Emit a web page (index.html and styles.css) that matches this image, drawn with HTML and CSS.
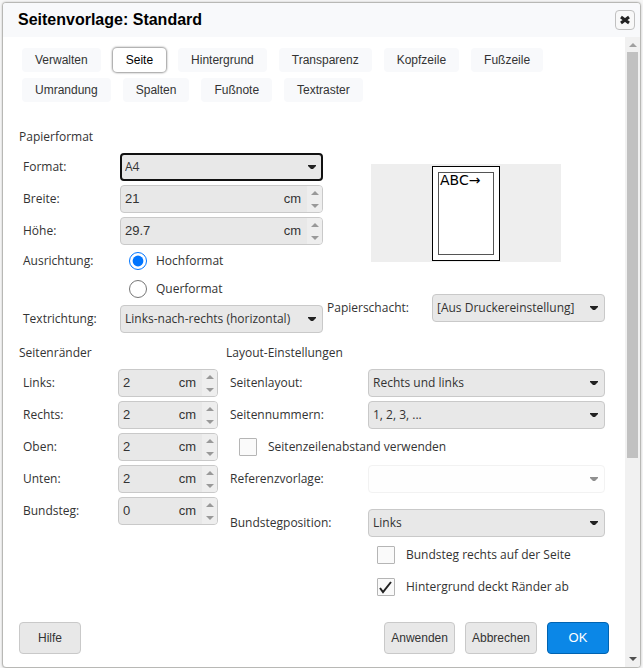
FILE: index.html
```html
<!DOCTYPE html>
<html lang="de">
<head>
<meta charset="utf-8">
<title>Seitenvorlage: Standard</title>
<meta name="viewport" content="width=device-width, initial-scale=1">
<link rel="stylesheet" href="styles.css">
</head>
<body>
<svg class="defs" aria-hidden="true">
  <symbol id="caret" viewBox="0 0 8 4"><path d="M0 0h8v1L5 4H3L0 1z"/></symbol>
  <symbol id="up" viewBox="0 0 8 4"><path d="M4 0l4 4H0z"/></symbol>
  <symbol id="down" viewBox="0 0 8 4"><path d="M0 0h8L4 4z"/></symbol>
</svg>
<div class="dialog" role="dialog" aria-labelledby="title">
  <header class="titlebar">
    <h1 id="title">Seitenvorlage: Standard</h1>
    <button class="close" type="button" aria-label="Schließen"><svg viewBox="0 0 10 10"><path d="M1 2l8 6M9 2L1 8"/></svg></button>
  </header>
  <div class="body">
    <form class="content">
      <nav class="tabs" role="tablist">
        <button type="button" role="tab" class="tab">Verwalten</button>
        <button type="button" role="tab" class="tab active" aria-selected="true">Seite</button>
        <button type="button" role="tab" class="tab">Hintergrund</button>
        <button type="button" role="tab" class="tab">Transparenz</button>
        <button type="button" role="tab" class="tab">Kopfzeile</button>
        <button type="button" role="tab" class="tab">Fußzeile</button>
        <button type="button" role="tab" class="tab">Umrandung</button>
        <button type="button" role="tab" class="tab">Spalten</button>
        <button type="button" role="tab" class="tab">Fußnote</button>
        <button type="button" role="tab" class="tab">Textraster</button>
      </nav>

      <h2 class="paper-title">Papierformat</h2>
      <div class="paper">
        <div class="rows paper-rows">
          <label for="format">Format:</label>
          <div class="select focused"><select id="format"><option>A4</option></select><svg class="caret"><use href="#caret"/></svg></div>
          <label for="width">Breite:</label>
          <div class="spin"><input id="width" type="number" step="any" value="21"><span>cm</span><div class="steps"><button type="button" aria-label="Mehr"><svg><use href="#up"/></svg></button><button type="button" aria-label="Weniger"><svg><use href="#down"/></svg></button></div></div>
          <label for="height">Höhe:</label>
          <div class="spin"><input id="height" type="number" step="any" value="29.7"><span>cm</span><div class="steps"><button type="button" aria-label="Mehr"><svg><use href="#up"/></svg></button><button type="button" aria-label="Weniger"><svg><use href="#down"/></svg></button></div></div>
          <span class="orientation">Ausrichtung:</span>
          <div class="radios">
            <label><input type="radio" name="orientation" checked>Hochformat</label>
            <label><input type="radio" name="orientation">Querformat</label>
          </div>
          <label for="direction">Textrichtung:</label>
          <div class="select"><select id="direction"><option>Links-nach-rechts (horizontal)</option></select><svg class="caret"><use href="#caret"/></svg></div>
        </div>
        <div class="paper-side">
          <div class="preview"><div class="sheet"><div class="sheet-text">ABC→</div></div></div>
          <div class="tray">
            <label for="tray">Papierschacht:</label>
            <div class="select"><select id="tray"><option>[Aus Druckereinstellung]</option></select><svg class="caret"><use href="#caret"/></svg></div>
          </div>
        </div>
      </div>

      <div class="lower">
        <section>
          <h2>Seitenränder</h2>
          <div class="rows margin-rows">
            <label for="left">Links:</label>
            <div class="spin"><input id="left" type="number" step="any" value="2"><span>cm</span><div class="steps"><button type="button" aria-label="Mehr"><svg><use href="#up"/></svg></button><button type="button" aria-label="Weniger"><svg><use href="#down"/></svg></button></div></div>
            <label for="right">Rechts:</label>
            <div class="spin"><input id="right" type="number" step="any" value="2"><span>cm</span><div class="steps"><button type="button" aria-label="Mehr"><svg><use href="#up"/></svg></button><button type="button" aria-label="Weniger"><svg><use href="#down"/></svg></button></div></div>
            <label for="top">Oben:</label>
            <div class="spin"><input id="top" type="number" step="any" value="2"><span>cm</span><div class="steps"><button type="button" aria-label="Mehr"><svg><use href="#up"/></svg></button><button type="button" aria-label="Weniger"><svg><use href="#down"/></svg></button></div></div>
            <label for="bottom">Unten:</label>
            <div class="spin"><input id="bottom" type="number" step="any" value="2"><span>cm</span><div class="steps"><button type="button" aria-label="Mehr"><svg><use href="#up"/></svg></button><button type="button" aria-label="Weniger"><svg><use href="#down"/></svg></button></div></div>
            <label for="gutter">Bundsteg:</label>
            <div class="spin"><input id="gutter" type="number" step="any" value="0"><span>cm</span><div class="steps"><button type="button" aria-label="Mehr"><svg><use href="#up"/></svg></button><button type="button" aria-label="Weniger"><svg><use href="#down"/></svg></button></div></div>
          </div>
        </section>
        <section>
          <h2>Layout-Einstellungen</h2>
          <div class="rows layout-rows">
            <label for="layout">Seitenlayout:</label>
            <div class="select"><select id="layout"><option>Rechts und links</option></select><svg class="caret"><use href="#caret"/></svg></div>
            <label for="numbers">Seitennummern:</label>
            <div class="select"><select id="numbers"><option>1, 2, 3, ...</option></select><svg class="caret"><use href="#caret"/></svg></div>
            <label class="check wide"><span class="box"><input type="checkbox"><svg viewBox="0 0 18 18"><path d="M3 10l3 4 8-10"/></svg></span>Seitenzeilenabstand verwenden</label>
            <label for="reference">Referenzvorlage:</label>
            <div class="select disabled"><select id="reference" disabled><option></option></select><svg class="caret"><use href="#caret"/></svg></div>
            <label for="position" class="spaced">Bundstegposition:</label>
            <div class="select spaced"><select id="position"><option>Links</option></select><svg class="caret"><use href="#caret"/></svg></div>
            <label class="check second"><span class="box"><input type="checkbox"><svg viewBox="0 0 18 18"><path d="M3 10l3 4 8-10"/></svg></span>Bundsteg rechts auf der Seite</label>
            <label class="check second"><span class="box"><input type="checkbox" checked><svg viewBox="0 0 18 18"><path d="M3 10l3 4 8-10"/></svg></span>Hintergrund deckt Ränder ab</label>
          </div>
        </section>
      </div>

      <footer class="actions">
        <button type="button" class="btn help">Hilfe</button>
        <button type="button" class="btn">Anwenden</button>
        <button type="button" class="btn">Abbrechen</button>
        <button type="button" class="btn primary">OK</button>
      </footer>
    </form>
    <div class="scrollbar" aria-hidden="true">
      <svg class="sb-up"><use href="#up"/></svg>
      <div class="track"><div class="thumb"></div></div>
      <svg class="sb-down"><use href="#down"/></svg>
    </div>
  </div>
</div>
</body>
</html>
```
FILE: styles.css
```css
* { box-sizing: border-box; }

body {
  margin: 0;
  padding: 2px 2px 0;
  min-height: 100vh;
  display: flex;
  background: #f6f6f6;
  color: #333;
  font: 12px/16px "Open Sans", "Noto Sans", sans-serif;
}

button, input, select { margin: 0; font: inherit; color: inherit; }

h1, h2 { margin: 0; }

.defs { position: absolute; width: 0; height: 0; }

.dialog {
  flex: 1;
  display: flex;
  flex-direction: column;
  border: 1px solid #b8b8b5;
  border-radius: 4px;
  background: #fff;
  box-shadow: 0 0 2px #bbb;
  overflow: hidden;
}

.titlebar {
  display: flex;
  align-items: center;
  justify-content: space-between;
  height: 34px;
  padding: 0 5px 0 15px;
  background: #f8f9fb;
}

.titlebar h1 {
  color: #000;
  font: bold 16px/20px "Liberation Sans", sans-serif;
}

.close {
  display: grid;
  place-items: center;
  width: 20px;
  height: 20px;
  padding: 0;
  border: 1px solid #c0c0c0;
  border-radius: 4px;
  background: #f8f8f8;
}

.close svg {
  width: 10px;
  height: 10px;
  stroke: #222;
  stroke-width: 3;
}

.body { flex: 1; display: flex; }

.content {
  flex: 1;
  min-width: 0;
  padding: 11px 16px 12px;
}

.tabs {
  display: flex;
  flex-wrap: wrap;
  gap: 6px 12px;
  padding: 0 32px 0 3px;
}

.tab {
  height: 24px;
  padding: 0 13px;
  border: 0;
  border-radius: 4px;
  background: #f8f9fb;
  font: 12px/16px "Liberation Sans", sans-serif;
}

.tab.active {
  background: #fff;
  color: #000;
  box-shadow: 0 0 2px 1px #999;
}

h2 {
  margin-bottom: 8px;
  font-size: 12px;
  font-weight: 400;
  line-height: 16px;
}

.paper-title { margin-top: 27px; }

.paper {
  display: grid;
  grid-template-columns: 304fr 278fr;
  column-gap: 4px;
  padding-right: 4px;
}

.rows {
  display: grid;
  align-items: center;
  row-gap: 4px;
  padding-left: 4px;
}

.paper-rows { grid-template-columns: 97px 1fr; }
.margin-rows { grid-template-columns: 95px 1fr; }
.layout-rows { grid-template-columns: 138px 1fr; }

.select {
  display: grid;
  align-items: center;
  min-width: 0;
}

.select select, .select .caret { grid-area: 1 / 1; }

.select select {
  appearance: none;
  width: 100%;
  height: 28px;
  padding: 0 20px 0 4px;
  border: 1px solid #c9c9c9;
  border-radius: 4px;
  background: #e8e8e8;
  outline: 0;
}

.select.focused select {
  padding-left: 3px;
  border: 2px solid #111;
}

.caret {
  justify-self: end;
  width: 8px;
  height: 4px;
  margin-right: 7px;
  fill: #222;
  pointer-events: none;
}

.select.disabled select {
  border-color: #f2f2f2;
  background: #fefefe;
  opacity: 1;
}

.select.disabled .caret { fill: #909090; }

.spin {
  display: flex;
  align-items: center;
  height: 28px;
  border: 1px solid #c9c9c9;
  border-radius: 4px;
  background: #e8e8e8;
  overflow: hidden;
  font: 13px/16px "Liberation Sans", sans-serif;
}

.spin input {
  flex: 1;
  min-width: 0;
  padding: 0 0 0 4px;
  border: 0;
  background: none;
  appearance: textfield;
  outline: 0;
}

.spin input::-webkit-inner-spin-button { appearance: none; }

.spin span { margin-right: 6px; }

.steps {
  display: flex;
  flex-direction: column;
  align-self: stretch;
  width: 15px;
  background: #eee;
}

.steps button {
  flex: 1;
  display: grid;
  place-items: center;
  padding: 0;
  border: 0;
  background: none;
}

.steps svg { width: 8px; height: 4px; fill: #999; }

.orientation { align-self: start; padding-top: 4px; }

.radios { display: grid; row-gap: 4px; }

.radios label {
  display: flex;
  align-items: center;
  gap: 9px;
  height: 24px;
  padding-left: 9px;
}

.radios input { width: 18px; height: 18px; }

.paper-side { padding-top: 11px; }

.preview {
  display: grid;
  place-items: center;
  width: 68%;
  height: 98px;
  margin: 0 auto 32px;
  background: #eee;
}

.sheet {
  width: 68px;
  height: 95px;
  padding: 5px;
  border: 1px solid #000;
  background: #fff;
}

.sheet-text {
  height: 100%;
  padding-left: 1px;
  border: 1px solid #555;
  color: #000;
  font: 14px/15px "DejaVu Sans", sans-serif;
}

.tray {
  display: grid;
  grid-template-columns: 105px 1fr;
  align-items: center;
}

.lower {
  display: grid;
  grid-template-columns: 199fr 379fr;
  column-gap: 8px;
  margin-top: 12px;
  padding-right: 4px;
}

.spaced { margin-top: 12px; }

.check {
  display: flex;
  align-items: center;
  gap: 11px;
  height: 28px;
  padding-left: 9px;
}

.check.wide { grid-column: 1 / -1; }
.check.second { grid-column: 2; }

.box { display: grid; width: 18px; height: 18px; }

.box input, .box svg { grid-area: 1 / 1; width: 18px; height: 18px; }

.box input {
  appearance: none;
  border: 1px solid #b5b5b5;
  border-radius: 1px;
  background: #fafafa;
}

.box svg {
  visibility: hidden;
  fill: none;
  stroke: #222;
  stroke-width: 2;
  pointer-events: none;
}

.box input:checked + svg { visibility: visible; }

.actions {
  display: flex;
  gap: 10px;
  margin-top: 21px;
}

.btn {
  height: 32px;
  padding: 0 6px;
  border: 1px solid #c9c9c9;
  border-radius: 4px;
  background: #e8e8e8;
  font: 12px/16px "Liberation Sans", sans-serif;
}

.help { min-width: 62px; margin-right: auto; }

.primary {
  min-width: 62px;
  border-color: #0063b1;
  background: #0b87e7;
  color: #fff;
  font-size: 13px;
}

.scrollbar {
  display: flex;
  flex-direction: column;
  align-items: center;
  width: 15px;
  padding: 6px 0;
  background: #f1f1f1;
}

.scrollbar svg { width: 8px; height: 4px; fill: #a0a0a0; }

.scrollbar .sb-down { fill: #505050; }

.track {
  flex: 1;
  display: grid;
  grid-template-rows: 21fr 10fr;
  width: 11px;
  margin: 5px 0;
}

.thumb { background: #c1c1c1; }
```
